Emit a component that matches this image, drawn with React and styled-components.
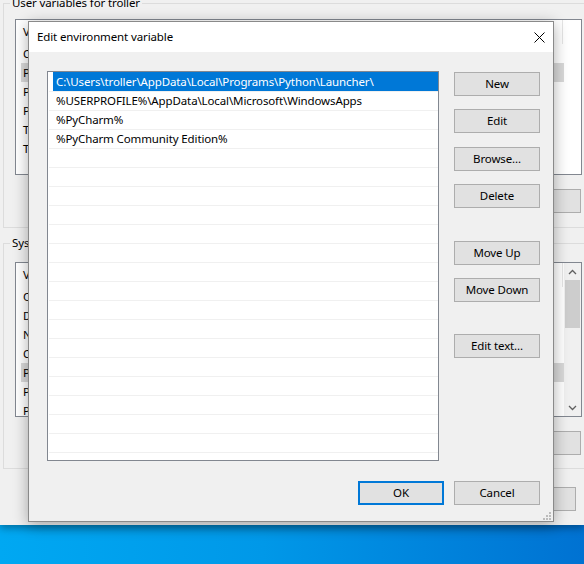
import React from 'react';
import styled, { createGlobalStyle } from 'styled-components';

const FONT = `"Noto Sans", "Open Sans", sans-serif`;
const UI_FONT = `11.5px/16px ${FONT}`;

const GlobalStyle = createGlobalStyle`
  html, body { margin: 0; padding: 0; }
  body {
    font-family: ${FONT};
    font-size: 11.5px;
    letter-spacing: -0.12px;
    color: #000;
  }
  #root { width: 584px; height: 564px; }
`;

const Desktop = styled.div`
  position: relative;
  width: 584px;
  height: 564px;
  overflow: hidden;
  background: linear-gradient(90deg, #00a8f2 0%, #0098e8 45%, #0072d2 100%);
`;

/* ---------- background "Environment Variables" window ---------- */
const ParentWindow = styled.div`
  height: 525px;
  background: #f0f0f0;
  box-shadow: 0 3px 8px rgba(0, 0, 0, 0.35);
  overflow: hidden;
`;

const ParentInner = styled.div`
  width: 590px;
  margin-left: 3px;
  display: flex;
  flex-direction: column;
`;

const GroupBox = styled.fieldset`
  margin: ${p => p.$mt}px 0 0 0;
  padding: ${p => p.$pt}px 10px ${p => p.$pb}px 11px;
  border: 1px solid #dcdcdc;
  min-width: 0;
  box-sizing: border-box;
  width: 590px;
`;

const Legend = styled.legend`
  font: ${UI_FONT};
  letter-spacing: -0.12px;
  padding: 0 2px;
  margin-left: -5px;
`;

const BgList = styled.div`
  height: ${p => p.$h}px;
  box-sizing: border-box;
  border: 1px solid #828790;
  background: #fff;
  display: flex;
  overflow: hidden;
`;

const BgListMain = styled.div`
  flex: 1;
  display: flex;
  flex-direction: column;
`;

const BgHeader = styled.div`
  width: 547px;
  height: 24px;
  flex: none;
  box-sizing: border-box;
  border-right: 1px solid #e5e5e5;
  display: flex;
  align-items: center;
  padding-left: 7px;
  font: ${UI_FONT};
  letter-spacing: -0.12px;
`;

const BgRow = styled.div`
  height: 19px;
  flex: none;
  margin-left: 5px;
  width: 543px;
  padding-left: 2px;
  box-sizing: border-box;
  display: flex;
  align-items: center;
  background: ${p => (p.$selected ? '#d9d9d9' : 'transparent')};
  font: 11.5px/19px ${FONT};
  letter-spacing: -0.12px;
  white-space: nowrap;
  overflow: hidden;
`;

const BgSide = styled.div`
  width: 17px;
  flex: none;
  display: flex;
  flex-direction: column;
  background: ${p => (p.$scroll ? '#f0f0f0' : '#fff')};
`;

const ScrollArrow = styled.div`
  height: 17px;
  display: flex;
  align-items: center;
  justify-content: center;
`;

const ScrollThumb = styled.div`
  height: 48px;
  margin: 0 1px;
  background: #cdcdcd;
`;

const ScrollTrack = styled.div`
  flex: 1;
`;

const BgButtonRow = styled.div`
  display: flex;
  justify-content: flex-end;
  gap: 10px;
  margin-top: 14px;
  padding-right: ${p => p.$pr || 0}px;
`;

const BgFooter = styled.div`
  display: flex;
  justify-content: flex-end;
  gap: 10px;
  margin-top: 18px;
  padding-right: 17px;
`;

/* ---------- shared button ---------- */
const Button = styled.button`
  width: ${p => p.$w || 86}px;
  height: 24px;
  margin: ${p => p.$mt || 0}px 0 0 0;
  padding: 0;
  box-sizing: border-box;
  background: #e1e1e1;
  border: ${p => (p.$default ? '2px solid #0078d7' : '1px solid #adadad')};
  border-radius: 0;
  font: ${UI_FONT};
  letter-spacing: -0.12px;
  color: #000;
  flex: none;
`;

/* ---------- foreground dialog ---------- */
const Dialog = styled.div`
  position: absolute;
  left: 28px;
  top: 21px;
  width: 526px;
  height: 501px;
  box-sizing: border-box;
  border: 1px solid #8a8a8a;
  background: #f0f0f0;
  box-shadow: 0 3px 14px rgba(0, 0, 0, 0.32);
  display: flex;
  flex-direction: column;
`;

const TitleBar = styled.div`
  height: 30px;
  flex: none;
  background: #fff;
  display: flex;
  align-items: center;
  justify-content: space-between;
  padding: 0 8px 0 8px;
`;

const Title = styled.span`
  font: ${UI_FONT};
  letter-spacing: -0.12px;
  color: #000;
`;

const DialogBody = styled.div`
  flex: 1;
  display: flex;
  flex-direction: column;
  padding: 19px 13px 16px 18px;
`;

const DialogMain = styled.div`
  display: flex;
  gap: 15px;
`;

const PathList = styled.div`
  width: 392px;
  height: 390px;
  box-sizing: border-box;
  border: 1px solid #828790;
  background: #fff;
  overflow: hidden;
  display: flex;
  flex-direction: column;
`;

const PathRow = styled.div`
  height: 19px;
  flex: none;
  box-sizing: border-box;
  border-top: 1px solid ${p => (p.$selected ? '#0078d7' : '#f0f0f0')};
  margin-left: ${p => (p.$selected ? 5 : 1)}px;
  padding-left: ${p => (p.$selected ? 3 : 7)}px;
  background: ${p => (p.$selected ? '#0078d7' : 'transparent')};
  color: ${p => (p.$selected ? '#fff' : '#000')};
  font: 11.5px/18px ${FONT};
  letter-spacing: -0.12px;
  white-space: nowrap;
  overflow: hidden;
`;

const ButtonColumn = styled.div`
  width: 86px;
  display: flex;
  flex-direction: column;
`;

const DialogFooter = styled.div`
  display: flex;
  justify-content: flex-end;
  gap: 10px;
  margin-top: 20px;
`;

const Grip = styled.svg`
  position: absolute;
  right: 2px;
  bottom: 1px;
`;

const Chevron = ({ up }) => (
  <svg width="9" height="6" viewBox="0 0 9 6">
    <path
      d={up ? 'M1 5 L4.5 1.5 L8 5' : 'M1 1 L4.5 4.5 L8 1'}
      fill="none"
      stroke="#606060"
      strokeWidth="1.3"
    />
  </svg>
);

const userVars = ['OneDrive', 'Path', 'PyCharm', 'PyCharm Community Edition', 'TEMP', 'TMP'];

const sysVars = [
  'ComSpec',
  'DriverData',
  'NUMBER_OF_PROCESSORS',
  'OS',
  'Path',
  'PATHEXT',
  'PROCESSOR_ARCHITECTURE',
];

const paths = [
  'C:\\Users\\troller\\AppData\\Local\\Programs\\Python\\Launcher\\',
  '%USERPROFILE%\\AppData\\Local\\Microsoft\\WindowsApps',
  '%PyCharm%',
  '%PyCharm Community Edition%',
];

function VarList({ h, rows, selected, scroll }) {
  return (
    <BgList $h={h}>
      <BgListMain>
        <BgHeader>Variable</BgHeader>
        {rows.map((n, i) => (
          <BgRow key={n + i} $selected={i === selected}>{n}</BgRow>
        ))}
      </BgListMain>
      <BgSide $scroll={scroll}>
        {scroll && (
          <>
            <ScrollArrow><Chevron up /></ScrollArrow>
            <ScrollThumb />
            <ScrollTrack />
            <ScrollArrow><Chevron /></ScrollArrow>
          </>
        )}
      </BgSide>
    </BgList>
  );
}

export default function App() {
  const emptyRows = Array.from({ length: 17 });
  return (
    <Desktop>
      <GlobalStyle />
      <ParentWindow>
        <ParentInner>
          <GroupBox $mt={-5} $pt={8} $pb={14}>
            <Legend>User variables for troller</Legend>
            <VarList h={156} rows={userVars} selected={1} />
            <BgButtonRow $pr={1}>
              <Button $w={110}>New...</Button>
              <Button $w={110}>Edit...</Button>
              <Button $w={110}>Delete</Button>
            </BgButtonRow>
          </GroupBox>
          <GroupBox $mt={7} $pt={11} $pb={13}>
            <Legend>System variables</Legend>
            <VarList h={155} rows={sysVars} selected={4} scroll />
            <BgButtonRow $pr={1}>
              <Button $w={110}>New...</Button>
              <Button $w={110}>Edit...</Button>
              <Button $w={110}>Delete</Button>
            </BgButtonRow>
          </GroupBox>
          <BgFooter>
            <Button $w={100}>OK</Button>
            <Button $w={100}>Cancel</Button>
          </BgFooter>
        </ParentInner>
      </ParentWindow>

      <Dialog>
        <TitleBar>
          <Title>Edit environment variable</Title>
          <svg width="11" height="11" viewBox="0 0 11 11">
            <path d="M0.5 0.5 L10.5 10.5 M10.5 0.5 L0.5 10.5" stroke="#000" strokeWidth="1" />
          </svg>
        </TitleBar>
        <DialogBody>
          <DialogMain>
            <PathList>
              {paths.map((p, i) => (
                <PathRow key={p} $selected={i === 0}>{p}</PathRow>
              ))}
              {emptyRows.map((_, i) => (
                <PathRow key={'e' + i} />
              ))}
            </PathList>
            <ButtonColumn>
              <Button $mt={1}>New</Button>
              <Button $mt={13}>Edit</Button>
              <Button $mt={14}>Browse...</Button>
              <Button $mt={13}>Delete</Button>
              <Button $mt={33}>Move Up</Button>
              <Button $mt={13}>Move Down</Button>
              <Button $mt={32}>Edit text...</Button>
            </ButtonColumn>
          </DialogMain>
          <DialogFooter>
            <Button $default>OK</Button>
            <Button>Cancel</Button>
          </DialogFooter>
        </DialogBody>
        <Grip width="8" height="8" viewBox="0 0 8 8">
          <g fill="#bcbcbc">
            <rect x="6" y="0" width="2" height="2" />
            <rect x="3" y="3" width="2" height="2" />
            <rect x="6" y="3" width="2" height="2" />
            <rect x="0" y="6" width="2" height="2" />
            <rect x="3" y="6" width="2" height="2" />
            <rect x="6" y="6" width="2" height="2" />
          </g>
        </Grip>
      </Dialog>
    </Desktop>
  );
}
